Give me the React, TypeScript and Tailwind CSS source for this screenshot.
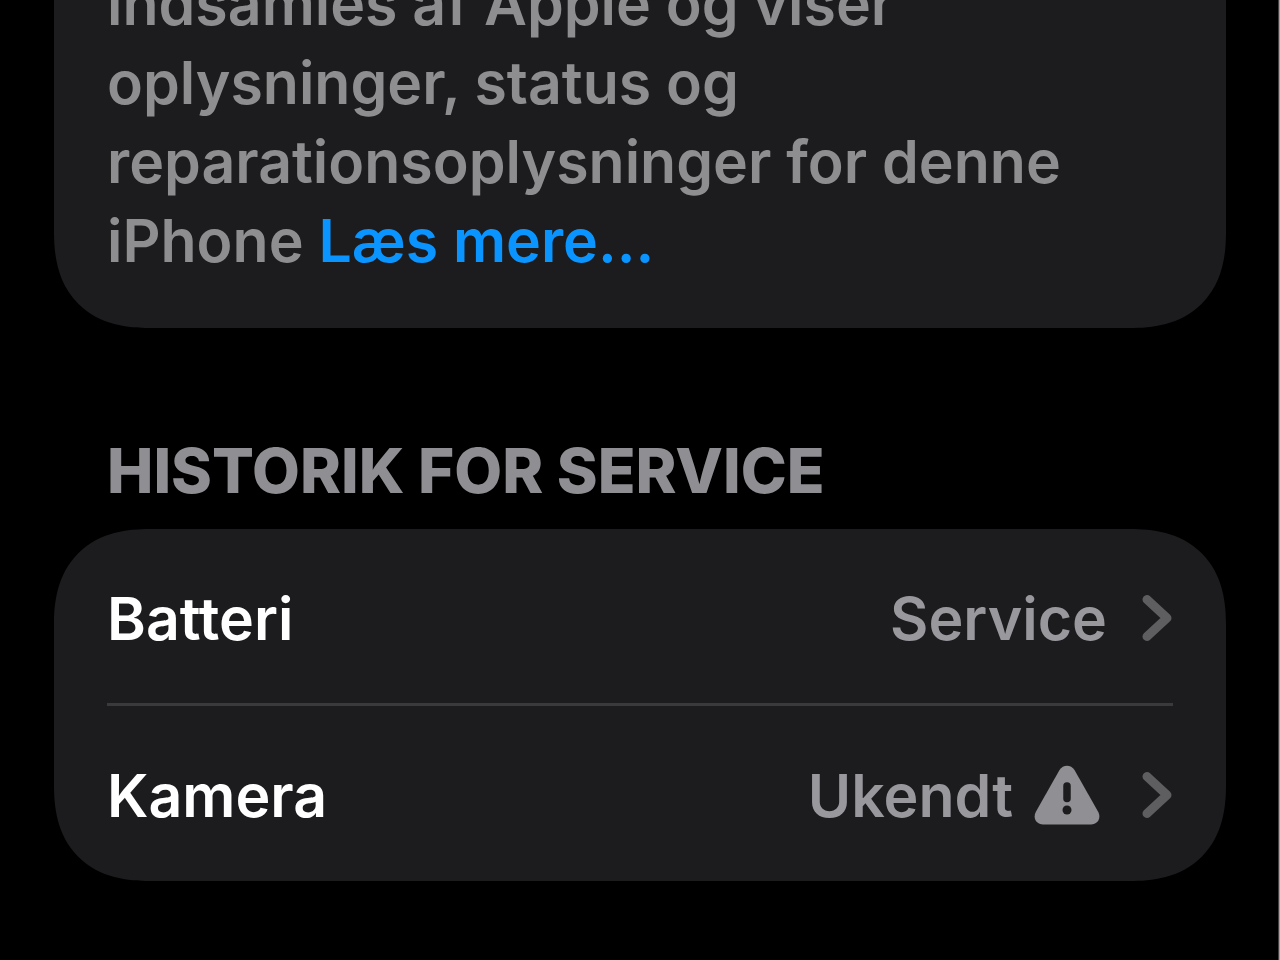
import clsx from "clsx";

const rows = [
  { label: "Batteri", value: "Service", warning: false },
  { label: "Kamera", value: "Ukendt", warning: true },
];

function Chevron() {
  return (
    <svg
      className="ml-[34px] h-12 w-8 shrink-0 text-[#5e5e60]"
      viewBox="0 0 32 48"
      fill="none"
      stroke="currentColor"
      strokeWidth="9"
      strokeLinecap="round"
      strokeLinejoin="round"
      aria-hidden="true"
    >
      <path d="M6 5.500 L26 24 L6 42.500" />
    </svg>
  );
}

function Warning() {
  return (
    <svg
      className="mr-1.5 ml-5 h-16 w-17 shrink-0 text-[#8f8f94]"
      viewBox="0 0 68 64"
      aria-hidden="true"
    >
      <path
        fill="currentColor"
        d="M26.500 7 C30 1.300 38 1.300 41.500 7 L65 48.500 C68.500 55 65 61.500 58 61.500 L10 61.500 C3 61.500 -0.500 55 3 48.500 Z"
      />
      <path
        stroke="#1c1c1e"
        strokeWidth="7.5"
        strokeLinecap="round"
        d="M34 23 L34 35.500"
      />
      <circle cx="34" cy="47" r="4.5" fill="#1c1c1e" />
    </svg>
  );
}

export default function App() {
  return (
    <main className="min-h-screen overflow-hidden border-r border-[#a3a3a3] bg-black pr-[53px] pl-[54px] font-['Inter',sans-serif] text-[59px] leading-[79px] font-semibold text-[#8e8e90] shadow-[inset_-1px_0_0_#444]">
      <section className="rounded-b-[96px] bg-[#1c1c1e] px-[53px] pb-12 [corner-shape:superellipse(1.25)]">
        <p className="-mt-9">
          indsamles af Apple og viser
          <br />
          oplysninger, status og
          <br />
          reparationsoplysninger for denne
          <br />
          iPhone{" "}
          <a href="#" className="text-[#0a94ff]">
            Læs mere...
          </a>
        </p>
      </section>

      <section className="mt-[103px]">
        <h2 className="px-[53px] text-[62px] font-extrabold text-[#8e8e93]">
          HISTORIK FOR SERVICE
        </h2>
        <ul className="mt-[19px] rounded-[96px] bg-[#1c1c1e] px-[53px] pb-px [corner-shape:superellipse(1.25)]">
          {rows.map((row, i) => (
            <li
              key={row.label}
              className={clsx(i > 0 && "border-t-3 border-[#3a3a3c]")}
            >
              <button
                type="button"
                className="flex h-[174px] w-full items-center pt-1 text-left"
              >
                <span className="flex-1 text-white">{row.label}</span>
                <span className="text-[#98989d]">{row.value}</span>
                {row.warning && <Warning />}
                <Chevron />
              </button>
            </li>
          ))}
        </ul>
      </section>
    </main>
  );
}
